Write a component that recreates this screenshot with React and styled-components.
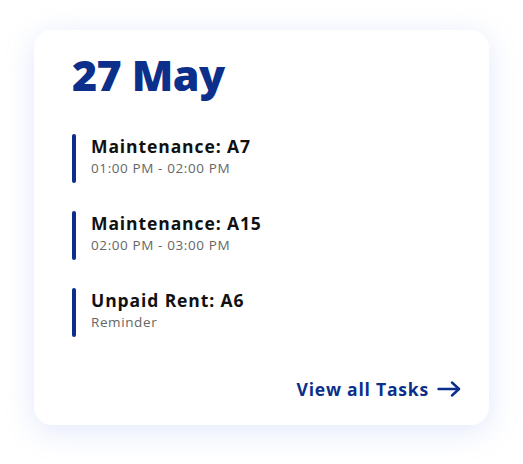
import React from "react";
import styled, { createGlobalStyle } from "styled-components";

const Global = createGlobalStyle`
  html, body { margin: 0; padding: 0; background: #ffffff; }
  body { font-family: "Open Sans", "Lato", sans-serif; }
`;

const Page = styled.div`
  padding: 30px 34px 0 34px;
  width: 523px;
  height: 464px;
  box-sizing: border-box;
`;

const Card = styled.div`
  width: 455px;
  height: 395px;
  box-sizing: border-box;
  background: #ffffff;
  border-radius: 18px;
  box-shadow: 0 6px 30px rgba(120, 150, 230, 0.22);
  padding: 15px 28px 0 38px;
  display: flex;
  flex-direction: column;
`;

const Title = styled.h1`
  margin: 0;
  font-family: "Open Sans", sans-serif;
  font-weight: 800;
  font-size: 43px;
  line-height: 60px;
  color: #0b2f8a;
  letter-spacing: -0.6px;
`;

const List = styled.div`
  display: flex;
  flex-direction: column;
  gap: 28px;
  margin-top: 29px;
`;

const Task = styled.div`
  display: flex;
  gap: 15px;
  height: 49px;
`;

const Bar = styled.div`
  width: 4px;
  border-radius: 2px;
  background: #0b2f8a;
`;

const Info = styled.div`
  display: flex;
  flex-direction: column;
  padding-top: 1px;
`;

const TaskName = styled.div`
  font-weight: 700;
  font-size: 17.5px;
  line-height: 23px;
  letter-spacing: 0.9px;
  color: #111111;
`;

const TaskSub = styled.div`
  font-size: 13.5px;
  line-height: 20px;
  letter-spacing: 0.6px;
  color: #666666;
`;

const Footer = styled.div`
  margin-top: auto;
  margin-bottom: 24px;
  display: flex;
  justify-content: flex-end;
  align-items: center;
  gap: 8px;
  color: #0b2f8a;
  font-weight: 700;
  font-size: 17.5px;
  letter-spacing: 0.8px;
`;

const tasks = [
  { name: "Maintenance: A7", sub: "01:00 PM - 02:00 PM" },
  { name: "Maintenance: A15", sub: "02:00 PM - 03:00 PM" },
  { name: "Unpaid Rent: A6", sub: "Reminder" },
];

export default function App() {
  return (
    <>
      <Global />
      <Page>
        <Card>
          <Title>27 May</Title>
          <List>
            {tasks.map((t) => (
              <Task key={t.name}>
                <Bar />
                <Info>
                  <TaskName>{t.name}</TaskName>
                  <TaskSub>{t.sub}</TaskSub>
                </Info>
              </Task>
            ))}
          </List>
          <Footer>
            <span>View all Tasks</span>
            <svg width="24" height="16" viewBox="0 0 24 16" fill="none" stroke="#0b2f8a" strokeWidth="2.4" strokeLinecap="round" strokeLinejoin="round">
              <path d="M1.5 8H22" />
              <path d="M15 1.5L22 8L15 14.5" />
            </svg>
          </Footer>
        </Card>
      </Page>
    </>
  );
}
